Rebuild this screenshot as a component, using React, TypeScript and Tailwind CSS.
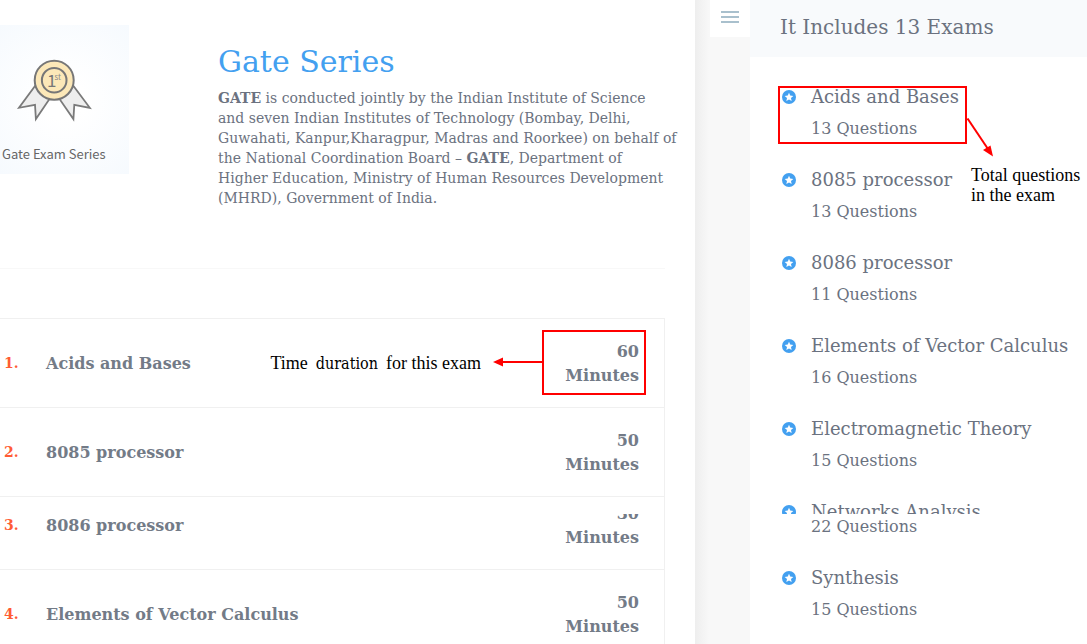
import React from "react";

type Exam = {
  name: string;
  minutes?: number;
  questions: number;
};

const exams: Exam[] = [
  { name: "Acids and Bases", minutes: 60, questions: 13 },
  { name: "8085 processor", minutes: 50, questions: 13 },
  { name: "8086 processor", minutes: 30, questions: 11 },
  { name: "Elements of Vector Calculus", minutes: 50, questions: 16 },
  { name: "Electromagnetic Theory", questions: 15 },
  { name: "Networks Analysis", questions: 22 },
  { name: "Synthesis", questions: 15 },
];

function StarBadge() {
  return (
    <svg viewBox="0 0 20 20" className="mt-px block size-3.5" aria-hidden="true">
      <circle cx="10" cy="10" r="10" fill="#43a0f0" />
      <path
        d="M10 3.9l1.75 4.1 4.45.4-3.37 2.93 1 4.37L10 13.4l-3.83 2.3 1-4.37L3.8 8.4 8.25 8z"
        fill="#fff"
      />
    </svg>
  );
}

function Medal() {
  return (
    <svg viewBox="0 0 78 66" className="h-[66px] w-[78px]" aria-hidden="true">
      <g fill="#eeeeee" stroke="#7a7a7a" strokeWidth="1.8" strokeLinejoin="miter">
        <path d="M20 29 L4 50.8 L20 47.8 L20.9 62 L34.5 42 Z" />
        <path d="M58.5 29 L74.8 50.8 L59.3 47.8 L58.4 62 L44.5 42 Z" />
      </g>
      <circle cx="39.2" cy="23.2" r="19.5" fill="#fce8b8" stroke="#777" strokeWidth="2" />
      <circle cx="39.2" cy="23.2" r="12.3" fill="#fce8b8" stroke="#777" strokeWidth="2" />
      <text x="32" y="29.5" fontSize="17" fontFamily="'Noto Sans CJK SC', sans-serif" fill="#777">
        1
      </text>
      <text x="39.5" y="23" fontSize="8" fontFamily="'Noto Sans CJK SC', sans-serif" fill="#888">
        st
      </text>
    </svg>
  );
}

function DurationNote() {
  return (
    <>
      <span className="absolute top-[11px] right-[18px] h-[65px] w-[104px] border-2 border-[#f00]" />
      <svg
        viewBox="0 0 50 10"
        className="absolute top-[38px] right-[121px] h-[10px] w-[50px]"
        aria-hidden="true"
      >
        <path d="M9 5H50" stroke="#f00" strokeWidth="2" />
        <path d="M0 5L10 0.5V9.5Z" fill="#f00" />
      </svg>
      <span className="absolute top-8 right-[183px] flex items-baseline gap-2 font-['Liberation_Serif',serif] text-lg leading-6 font-normal whitespace-nowrap text-black">
        Time
        <span className="font-['DejaVu_Serif_Condensed','DejaVu_Serif',serif] text-base leading-6">
          duration
        </span>
        for this exam
      </span>
    </>
  );
}

function QuestionsNote() {
  return (
    <>
      <span className="absolute top-px -left-0.5 h-[58px] w-[189px] border-2 border-[#f00]" />
      <svg
        viewBox="0 0 28 41"
        className="absolute top-[33px] left-[187px] h-[41px] w-7"
        aria-hidden="true"
      >
        <path d="M0.5 0.5L21 31" stroke="#f00" strokeWidth="2" />
        <path d="M26 38.5L16 32L23.5 27.5Z" fill="#f00" />
      </svg>
      <span className="absolute top-20 left-[191px] font-['Liberation_Serif',serif] text-lg leading-5 whitespace-nowrap text-black">
        Total questions
        <br />
        in the exam
      </span>
    </>
  );
}

function ExamRow({ exam, index }: { exam: Exam; index: number }) {
  const clipped = index === 2;
  return (
    <tr className="border-y border-[#f0f0f0]">
      <td
        className={`w-[46px] p-0 pl-1 text-sm leading-6 text-[#ff5c35] ${
          clipped ? "pt-4 align-top" : "align-middle"
        }`}
      >
        {index + 1}.
      </td>
      <th
        scope="row"
        className={`p-0 text-left text-base leading-6 ${
          clipped ? "pt-[17px] align-top" : "pt-0.5 align-middle"
        }`}
      >
        {exam.name}
      </th>
      <td
        className={`relative w-32 pr-[25px] pb-[19px] pl-0 text-right text-base leading-6 ${
          clipped ? "pt-[17px]" : "pt-[21px]"
        }`}
      >
        <span
          className={
            clipped ? "flex h-3 items-end justify-end overflow-hidden" : "block"
          }
        >
          {exam.minutes}
        </span>
        <span className="block">Minutes</span>
        {index === 0 && <DurationNote />}
      </td>
    </tr>
  );
}

function SidebarItem({ exam, index }: { exam: Exam; index: number }) {
  const clipped = index === 5;
  return (
    <li className="relative pb-[27px]">
      <div
        className={
          clipped ? "flex h-3.5 items-start overflow-hidden" : "flex h-6 items-start"
        }
      >
        <span className="w-[31px] shrink-0 pt-1 pl-0.5">
          <StarBadge />
        </span>
        <h3 className="text-lg leading-6">{exam.name}</h3>
      </div>
      <p className={clipped ? "mt-px pl-[31px] leading-6" : "mt-2 pl-[31px] leading-6"}>
        {exam.questions} Questions
      </p>
      {index === 0 && <QuestionsNote />}
    </li>
  );
}

export default function App() {
  return (
    <div className="flex h-screen overflow-hidden bg-white font-['DejaVu_Serif',serif] text-[#6b7280]">
      <main className="min-w-0 flex-1 pr-[30px]">
        <section className="flex h-[269px] items-start border-b border-[#f8f8f8] pt-[25px]">
          <figure className="flex h-[149px] w-[129px] shrink-0 flex-col bg-[radial-gradient(circle,#ffffff_20%,#f6fafe_100%)] pt-8 pl-[15px]">
            <Medal />
            <figcaption className="-ml-[13px] pt-[21px] font-['Noto_Sans_CJK_SC',sans-serif] text-[13px] leading-5 whitespace-nowrap text-[#666]">
              Gate Exam Series
            </figcaption>
          </figure>
          <div className="ml-[89px] min-w-0 flex-1 pt-4">
            <h1 className="text-3xl leading-[42px] text-[#43a0f0]">Gate Series</h1>
            <p className="mt-[5px] text-sm leading-5 whitespace-nowrap">
              <strong>GATE</strong> is conducted jointly by the Indian Institute of Science
              <br />
              and seven Indian Institutes of Technology (Bombay, Delhi,
              <br />
              Guwahati, Kanpur,Kharagpur, Madras and Roorkee) on behalf of
              <br />
              the National Coordination Board – <strong>GATE</strong>, Department of
              <br />
              Higher Education, Ministry of Human Resources Development
              <br />
              (MHRD), Government of India.
            </p>
          </div>
        </section>
        <table className="mt-[49px] w-full border-collapse border-r border-[#f0f0f0] font-bold text-[#737b87]">
          <tbody>
            {exams.slice(0, 4).map((exam, i) => (
              <ExamRow key={exam.name} exam={exam} index={i} />
            ))}
          </tbody>
        </table>
      </main>

      <div className="flex w-[55px] shrink-0 items-start justify-end bg-[linear-gradient(to_right,#eeeeee,#f8f8f8_14px)]">
        <button
          type="button"
          aria-label="Toggle exam list"
          className="flex h-[37px] w-10 flex-col items-center gap-[3px] bg-white pt-[11px]"
        >
          <span className="h-0.5 w-[18px] bg-[#a9c0cd]" />
          <span className="h-0.5 w-[18px] bg-[#a9c0cd]" />
          <span className="h-0.5 w-[18px] bg-[#a9c0cd]" />
        </button>
      </div>

      <aside className="w-[337px] shrink-0">
        <h2 className="h-[57px] bg-[#f8fafc] pt-3 pl-[30px] text-xl leading-[30px]">
          It Includes 13 Exams
        </h2>
        <ul className="pt-7 pl-[30px]">
          {exams.map((exam, i) => (
            <SidebarItem key={exam.name} exam={exam} index={i} />
          ))}
        </ul>
      </aside>
    </div>
  );
}
